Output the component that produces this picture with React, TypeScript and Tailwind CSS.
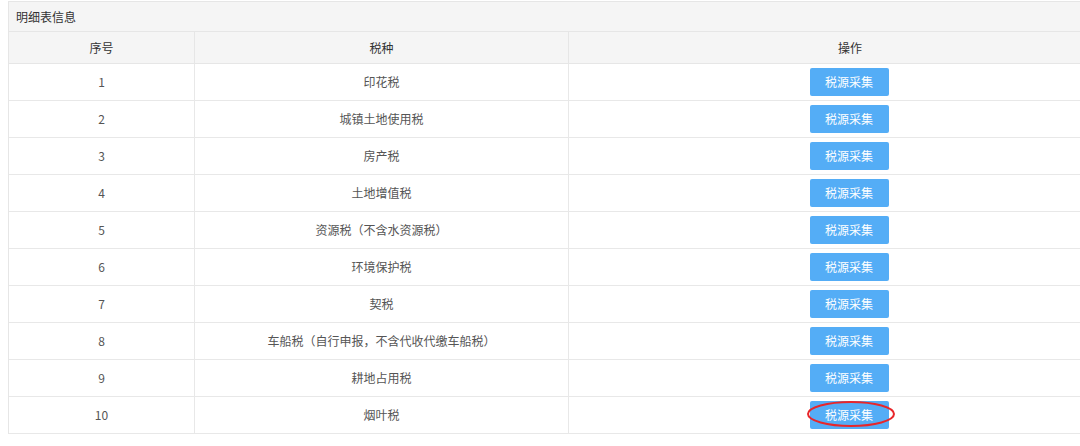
import React from "react";

const rows = [
  "印花税",
  "城镇土地使用税",
  "房产税",
  "土地增值税",
  "资源税（不含水资源税）",
  "环境保护税",
  "契税",
  "车船税（自行申报，不含代收代缴车船税）",
  "耕地占用税",
  "烟叶税",
];

export default function App() {
  return (
    <div
      className="w-[1080px] h-[446px] bg-white overflow-hidden text-[12px] text-[#444]"
      style={{ fontFamily: '"Noto Sans CJK SC", "Noto Sans", sans-serif' }}
    >
      <div className="pt-px pl-2 w-[1130px]">
        <div className="border-l border-t border-[#e6e6e6] w-[1122px]">
          <div className="h-[30px] bg-[#f5f5f5] border-b border-[#e6e6e6] flex items-center pl-[7px] text-[#333]">
            明细表信息
          </div>
          <div className="grid grid-cols-[186px_374px_562px]">
            <div className="h-[32px] bg-[#f5f5f5] border-b border-r border-[#e6e6e6] flex items-center justify-center text-[#333]">序号</div>
            <div className="h-[32px] bg-[#f5f5f5] border-b border-r border-[#e6e6e6] flex items-center justify-center text-[#333]">税种</div>
            <div className="h-[32px] bg-[#f5f5f5] border-b border-[#e6e6e6] flex items-center justify-center text-[#333]">操作</div>
            {rows.map((name, i) => (
              <React.Fragment key={i}>
                <div className="h-[37px] border-b border-r border-[#e8e8e8] flex items-center justify-center text-[#555]">{i + 1}</div>
                <div className="h-[37px] border-b border-r border-[#e8e8e8] flex items-center justify-center text-[#555]">{name}</div>
                <div className="h-[37px] border-b border-[#e8e8e8] flex items-center justify-center pr-[2px]">
                  <div className="relative">
                    <button className="w-[79px] h-[28px] rounded-[2px] bg-[#54adf6] text-white text-[12px] flex items-center justify-center">
                      税源采集
                    </button>
                    {i === 9 && (
                      <svg className="absolute left-[-4px] top-[-1px] pointer-events-none" width="90" height="28" viewBox="0 0 90 28">
                        <ellipse cx="45" cy="14" rx="43" ry="12" fill="none" stroke="#e8262a" strokeWidth="2" />
                      </svg>
                    )}
                  </div>
                </div>
              </React.Fragment>
            ))}
          </div>
        </div>
      </div>
    </div>
  );
}
